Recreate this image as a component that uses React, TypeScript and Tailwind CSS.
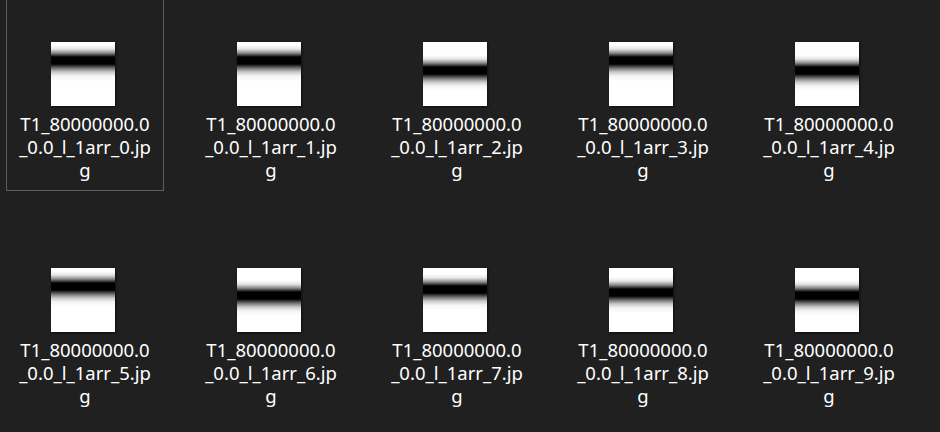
import React from "react";

// band centre (px inside the 64px thumbnail) for each generated image
const files = [
  { n: 0, band: 19 },
  { n: 1, band: 19 },
  { n: 2, band: 29 },
  { n: 3, band: 19 },
  { n: 4, band: 29 },
  { n: 5, band: 19 },
  { n: 6, band: 28 },
  { n: 7, band: 22 },
  { n: 8, band: 25 },
  { n: 9, band: 28 },
];

function Thumb({ band }: { band: number }) {
  const g = `linear-gradient(to bottom, #fff ${band - 16}px, #e6e6e6 ${band - 12}px, #8a8a8a ${band - 8}px, #000 ${band - 4}px, #000 ${band + 3}px, #6e6e6e ${band + 7}px, #c8c8c8 ${band + 11}px, #f4f4f4 ${band + 15}px, #fff ${band + 20}px)`;
  return (
    <div
      className="w-16 h-16 shadow-[1px_1px_2px_rgba(0,0,0,0.6)]"
      style={{ backgroundImage: g }}
    />
  );
}

function FileItem({ n, band, selected }: { n: number; band: number; selected?: boolean }) {
  return (
    <div
      className={`flex flex-col items-center h-[201px] pt-[51px] border ${
        selected ? "border-[#5f5f5f]" : "border-transparent"
      }`}
    >
      <div className="-ml-[5px]">
        <Thumb band={band} />
      </div>
      <div className="mt-[6px] text-center text-[18.5px] leading-[23px] text-white">
        <div>T1_80000000.0</div>
        <div>_0.0_l_1arr_{n}.jp</div>
        <div>g</div>
      </div>
    </div>
  );
}

export default function App() {
  return (
    <div
      className="w-[940px] h-[432px] overflow-hidden bg-[#202020]"
      style={{ fontFamily: '"Noto Sans", "Open Sans", sans-serif' }}
    >
      <div className="-mt-[10px] pl-[6px] grid grid-cols-[repeat(5,158px)] gap-x-[28px] gap-y-[25px]">
        {files.map((f) => (
          <FileItem key={f.n} n={f.n} band={f.band} selected={f.n === 0} />
        ))}
      </div>
    </div>
  );
}
